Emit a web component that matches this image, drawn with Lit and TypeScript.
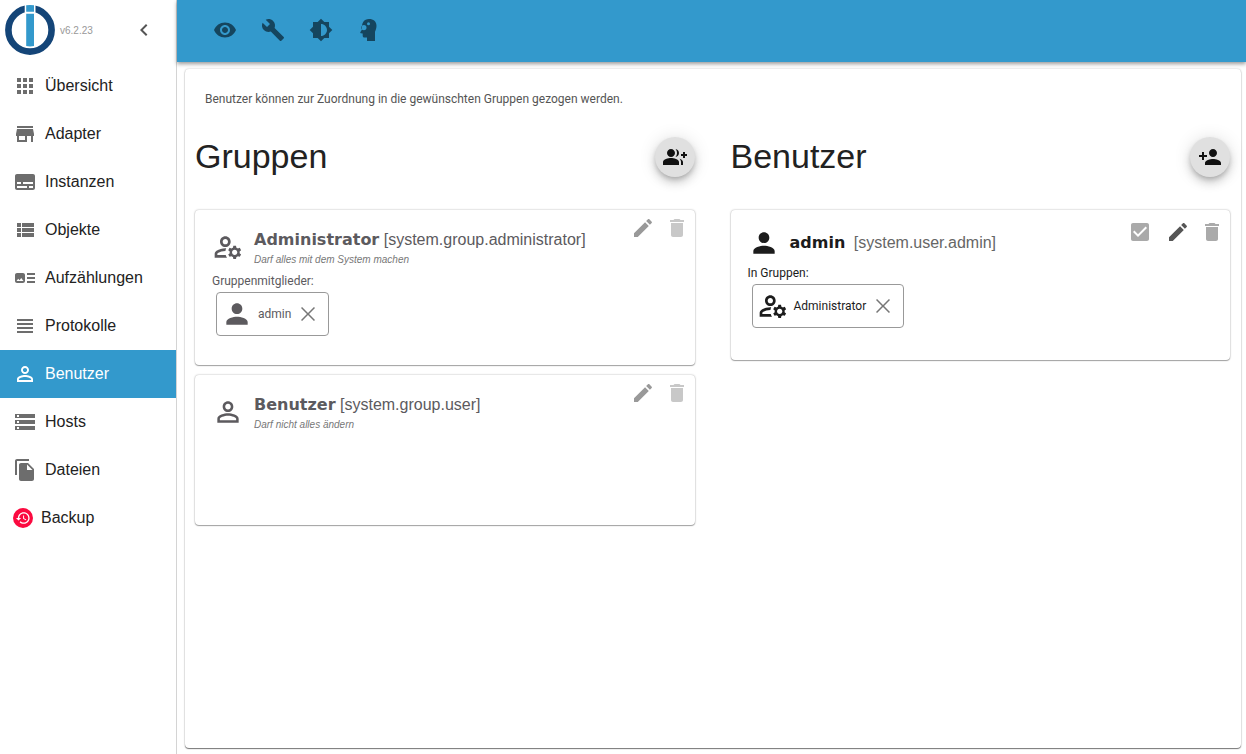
import { LitElement, html, svg, css, nothing } from "lit";
import { customElement, property } from "lit/decorators.js";
import { classMap } from "lit/directives/class-map.js";

const ICONS: Record<string, string> = {
  apps: "M4 8h4V4H4v4zm6 12h4v-4h-4v4zm-6 0h4v-4H4v4zm0-6h4v-4H4v4zm6 0h4v-4h-4v4zm6-10v4h4V4h-4zm-6 4h4V4h-4v4zm6 6h4v-4h-4v4zm0 6h4v-4h-4v4z",
  store: "M20 4H4v2h16V4zm1 10v-2l-1-5H4l-1 5v2h1v6h10v-6h4v6h2v-6h1zm-9 4H6v-4h6v4z",
  subtitles: "M20 4H4c-1.1 0-2 .9-2 2v12c0 1.1.9 2 2 2h16c1.1 0 2-.9 2-2V6c0-1.1-.9-2-2-2zM4 12h4v2H4v-2zm10 6H4v-2h10v2zm6 0h-4v-2h4v2zm0-4H10v-2h10v2z",
  list: "M4 14h4v-4H4v4zm0 5h4v-4H4v4zM4 9h4V5H4v4zm5 5h12v-4H9v4zm0 5h12v-4H9v4zM9 5v4h12V5H9z",
  art: "M22 13h-8v-2h8v2zm0-6h-8v2h8V7zm-8 10h8v-2h-8v2zm-2-8v6c0 1.1-.9 2-2 2H4c-1.1 0-2-.9-2-2V9c0-1.1.9-2 2-2h6c1.1 0 2 .9 2 2zm-1.5 6l-2.25-3-1.75 2.26-1.25-1.51L3.5 15h7z",
  lines: "M4 15h16v-2H4v2zm0 4h16v-2H4v2zm0-8h16V9H4v2zm0-6v2h16V5H4z",
  personOutline: "M12 5.9c1.16 0 2.1.94 2.1 2.1s-.94 2.1-2.1 2.1S9.9 9.16 9.9 8s.94-2.1 2.1-2.1m0 9c2.97 0 6.1 1.46 6.1 2.1v1.1H5.9V17c0-.64 3.13-2.1 6.1-2.1M12 4C9.79 4 8 5.79 8 8s1.79 4 4 4 4-1.79 4-4-1.79-4-4-4zm0 9c-2.67 0-8 1.34-8 4v3h16v-3c0-2.66-5.33-4-8-4z",
  storage: "M2 20h20v-4H2v4zm2-3h2v2H4v-2zM2 4v4h20V4H2zm4 3H4V5h2v2zm-4 7h20v-4H2v4zm2-3h2v2H4v-2z",
  files: "M16 1H4c-1.1 0-2 .9-2 2v14h2V3h12V1zm-1 4l6 6v10c0 1.1-.9 2-2 2H7.99C6.89 23 6 22.1 6 21l.01-14c0-1.1.89-2 1.99-2h7zm-1 7h5.5L14 6.5V12z",
  chevron: "M15.41 7.41L14 6l-6 6 6 6 1.41-1.41L10.83 12z",
  eye: "M12 4.5C7 4.5 2.73 7.61 1 12c1.73 4.39 6 7.5 11 7.5s9.27-3.11 11-7.5c-1.73-4.39-6-7.5-11-7.5zM12 17c-2.76 0-5-2.24-5-5s2.24-5 5-5 5 2.24 5 5-2.24 5-5 5zm0-8c-1.66 0-3 1.34-3 3s1.34 3 3 3 3-1.34 3-3-1.34-3-3-3z",
  wrench: "M22.7 19l-9.1-9.1c.9-2.3.4-5-1.5-6.9-2-2-5-2.4-7.4-1.3L9 6 6 9 1.6 4.7C.4 7.1.9 10.1 2.9 12.1c1.9 1.9 4.6 2.4 6.9 1.5l9.1 9.1c.4.4 1 .4 1.4 0l2.3-2.3c.5-.4.5-1.1.1-1.4z",
  brightness: "M20 15.31L23.31 12 20 8.69V4h-4.69L12 .69 8.69 4H4v4.69L.69 12 4 15.31V20h4.69L12 23.31 15.31 20H20v-4.69zM12 18V6c3.31 0 6 2.69 6 6s-2.69 6-6 6z",
  person: "M12 12c2.21 0 4-1.79 4-4s-1.79-4-4-4-4 1.79-4 4 1.79 4 4 4zm0 2c-2.67 0-8 1.34-8 4v2h16v-2c0-2.66-5.33-4-8-4z",
  personAdd: "M15 12c2.21 0 4-1.79 4-4s-1.79-4-4-4-4 1.79-4 4 1.79 4 4 4zm-9-2V7H4v3H1v2h3v3h2v-3h3v-2H6zm9 4c-2.67 0-8 1.34-8 4v2h16v-2c0-2.66-5.33-4-8-4z",
  groupAdd: "M22 9V7h-2v2h-2v2h2v2h2v-2h2V9zM8 12c2.21 0 4-1.79 4-4s-1.79-4-4-4-4 1.79-4 4 1.79 4 4 4zM8 13c-2.67 0-8 1.34-8 4v3h16v-3c0-2.66-5.33-4-8-4zM12.51 4.05C13.43 5.11 14 6.49 14 8s-.57 2.89-1.49 3.95C14.47 11.7 16 10.04 16 8s-1.53-3.7-3.49-3.95zM16.53 13.83C17.42 14.66 18 15.7 18 17v3h2v-3c0-1.45-1.59-2.51-3.47-3.17z",
  manage: "M4 18v-.65c0-.34.16-.66.41-.81C6.1 15.53 8.03 15 10 15c.03 0 .05 0 .08.01.1-.7.3-1.37.59-1.98-.22-.02-.44-.03-.67-.03-2.42 0-4.68.67-6.61 1.82-.88.52-1.39 1.5-1.39 2.53V20h9.26c-.42-.6-.75-1.28-.97-2H4zM10 12c2.21 0 4-1.79 4-4s-1.79-4-4-4C7.79 4 6 5.79 6 8s1.79 4 4 4zm0-6c1.1 0 2 .9 2 2s-.9 2-2 2-2-.9-2-2 .9-2 2-2zM20.75 16c0-.22-.03-.42-.06-.63l1.14-1.01-1-1.73-1.45.49c-.32-.27-.68-.48-1.08-.63L18 11h-2l-.3 1.49c-.4.15-.76.36-1.08.63l-1.45-.49-1 1.73 1.14 1.01c-.03.21-.06.41-.06.63s.03.42.06.63l-1.14 1.01 1 1.73 1.45-.49c.32.27.68.48 1.08.63L16 21h2l.3-1.49c.4-.15.76-.36 1.08-.63l1.45.49 1-1.73-1.14-1.01c.03-.21.06-.41.06-.63zM17 18c-1.1 0-2-.9-2-2s.9-2 2-2 2 .9 2 2-.9 2-2 2z",
  edit: "M3 17.25V21h3.75L17.81 9.94l-3.75-3.75L3 17.25zM20.71 7.04c.39-.39.39-1.02 0-1.41l-2.34-2.34c-.39-.39-1.02-.39-1.41 0l-1.83 1.83 3.75 3.75 1.83-1.83z",
  trash: "M6 19c0 1.1.9 2 2 2h8c1.1 0 2-.9 2-2V7H6v12zM19 4h-3.5l-1-1h-5l-1 1H5v2h14V4z",
  checkbox: "M19 3H5c-1.11 0-2 .9-2 2v14c0 1.1.89 2 2 2h14c1.11 0 2-.9 2-2V5c0-1.1-.89-2-2-2zm-9 14l-5-5 1.41-1.41L10 14.17l7.59-7.59L19 8l-9 9z",
  close: "M19 6.06L17.94 5 12 10.94 6.06 5 5 6.06 10.94 12 5 17.94 6.06 19 12 13.06 17.94 19 19 17.94 13.06 12z",
  history: "M13 3c-4.97 0-9 4.03-9 9H1l3.89 3.89.07.14L9 12H6c0-3.87 3.13-7 7-7s7 3.13 7 7-3.13 7-7 7c-1.93 0-3.68-.79-4.94-2.06l-1.42 1.42C8.27 19.99 10.51 21 13 21c4.97 0 9-4.03 9-9s-4.03-9-9-9zm-1 5v5l4.28 2.54.72-1.21-3.5-2.08V8H12z",
};

const icon = (name: string, size = 24) => html`<svg
  width=${size}
  height=${size}
  viewBox="0 0 24 24"
  fill="currentColor"
  aria-hidden="true"
>
  ${name === "head"
    ? svg`<path fill-rule="evenodd" d="M12 1c4.500 0 7.500 2.600 7.500 6.800 0 2.600-.8 4.200-1.500 6V23h-8v-3.500H7.500c-1.200 0-1.800-.7-1.800-1.800v-2.200l-2-.3c-.5-.1-.6-.5-.4-.9L5 11.500C4.300 5 7 1 12 1zM6.900 7a2.600 2.600 0 1 0 0 5.200 2.600 2.600 0 0 0 0-5.200zM11.500 4.200a1.500 1.500 0 1 0 0 3 1.500 1.500 0 0 0 0-3z"/>`
    : svg`<path d=${ICONS[name]}/>`}
</svg>`;

const shared = css`
  * {
    box-sizing: border-box;
  }
  svg {
    display: block;
    flex: none;
  }
  button {
    display: flex;
    align-items: center;
    justify-content: center;
    padding: 0;
    border: 0;
    background: none;
    color: inherit;
    font: inherit;
    cursor: pointer;
  }
`;

interface Chip {
  icon: string;
  label: string;
}

@customElement("entity-card")
export class EntityCard extends LitElement {
  @property() kind: "group" | "user" = "group";
  @property() icon = "person";
  @property() name = "";
  @property() ident = "";
  @property() description = "";
  @property() caption = "";
  @property({ attribute: false }) chips: Chip[] = [];

  static styles = [
    shared,
    css`
      :host {
        display: block;
      }
      .card {
        display: flex;
        flex-direction: column;
        position: relative;
        min-height: 150px;
        padding: 16px 17px 29px;
        border-radius: 4px;
        background: #fff;
        box-shadow: 0 1px 1px #0000004d, 0 0 2px #00000059;
      }
      .group {
        color: #5c5a5e;
      }
      .user {
        padding: 16px 17px 32px;
        color: #1c1c1c;
      }
      .head {
        display: flex;
        align-items: center;
        gap: 10px;
      }
      .group .head {
        min-height: 42px;
      }
      .group .texts {
        padding-top: 2px;
      }
      .user .head {
        min-height: 34px;
      }
      .texts {
        display: flex;
        flex-direction: column;
      }
      .title {
        margin: 0;
        font-weight: 400;
        font-size: 16px;
        line-height: 24px;
      }
      .name {
        font-family: "DejaVu Sans", sans-serif;
        font-weight: 700;
      }
      .user .ident {
        margin-left: 4px;
        color: #666;
      }
      .description {
        margin: 0;
        color: #777;
        font-size: 10px;
        font-style: italic;
        line-height: 16px;
      }
      .caption,
      .chip {
        font-family: Roboto, "Open Sans", sans-serif;
        font-size: 12px;
      }
      .caption {
        margin-top: 4px;
        line-height: 18px;
      }
      .chips {
        display: flex;
        flex-wrap: wrap;
        gap: 8px;
        margin: 2px 4px 0;
        padding: 0;
        list-style: none;
      }
      .chip {
        display: flex;
        align-items: center;
        height: 44px;
        padding: 0 8px 0 4px;
        border: 1px solid #999;
        border-radius: 4px;
        gap: 5px;
      }
      .chip button {
        color: #777;
      }
      .actions {
        display: flex;
        position: absolute;
        top: 6px;
        right: 6px;
        gap: 10px;
      }
      .user .actions {
        top: 10px;
        color: #555;
      }
      .group .actions button {
        color: #999;
      }
      .group .actions button:disabled {
        color: #c8c8c8;
      }
      .user .actions :disabled,
      .toggle {
        color: #aaa;
      }
      .toggle {
        display: grid;
        margin-right: 4px;
      }
      .toggle > * {
        grid-area: 1 / 1;
        margin: 0;
      }
      .toggle input {
        opacity: 0;
      }
    `,
  ];

  render() {
    return html`<article class=${classMap({ card: true, [this.kind]: true })}>
      <div class="head">
        ${icon(this.icon, 32)}
        <div class="texts">
          <h2 class="title">
            <strong class="name">${this.name}</strong>
            <span class="ident">[${this.ident}]</span>
          </h2>
          ${this.description
            ? html`<p class="description">${this.description}</p>`
            : nothing}
        </div>
      </div>
      ${this.chips.length
        ? html`<div class="caption">${this.caption}</div>
            <ul class="chips">
              ${this.chips.map(
                (c) => html`<li class="chip">
                  ${icon(c.icon, 32)}<span>${c.label}</span>
                  <button aria-label="${c.label} entfernen">${icon("close")}</button>
                </li>`
              )}
            </ul>`
        : nothing}
      <div class="actions">
        ${this.kind === "user"
          ? html`<label class="toggle"
              >${icon("checkbox")}<input
                type="checkbox"
                aria-label="Aktiviert"
                checked
                disabled
            /></label>`
          : nothing}
        <button aria-label="Bearbeiten">${icon("edit")}</button>
        <button aria-label="Löschen" disabled>${icon("trash")}</button>
      </div>
    </article>`;
  }
}

const NAV = [
  ["apps", "Übersicht"],
  ["store", "Adapter"],
  ["subtitles", "Instanzen"],
  ["list", "Objekte"],
  ["art", "Aufzählungen"],
  ["lines", "Protokolle"],
  ["personOutline", "Benutzer"],
  ["storage", "Hosts"],
  ["files", "Dateien"],
];

@customElement("app-root")
export class AppRoot extends LitElement {
  static styles = [
    shared,
    css`
      :host {
        display: flex;
        min-height: 100vh;
        background: #fff;
        color: #222;
        font-family: "Liberation Sans", Arial, sans-serif;
        font-size: 16px;
      }
      .sidebar {
        flex: none;
        width: 177px;
        border-right: 1px solid #d4d4d4;
      }
      .brand {
        display: flex;
        align-items: center;
        height: 61px;
        padding: 0 20px 1px 5px;
        gap: 5px;
      }
      .version {
        flex: 1;
        color: #999;
        font-size: 10px;
      }
      .collapse {
        color: #555;
      }
      .link {
        display: flex;
        align-items: center;
        height: 48px;
        padding: 0 13px;
        gap: 8px;
        color: #222;
        line-height: 24px;
        text-decoration: none;
      }
      .links {
        padding-top: 1px;
      }
      .link svg {
        color: #6d6d6d;
      }
      .link.active,
      .link.active svg {
        background: #3399cc;
        color: #fff;
      }
      .main {
        display: flex;
        flex: 1;
        flex-direction: column;
        min-width: 0;
      }
      .bar {
        display: flex;
        align-items: center;
        height: 62px;
        padding: 0 36px 2px;
        gap: 24px;
        background: #3399cc;
        color: #15455e;
        box-shadow: 0 2px 4px #00000066;
      }
      .panel {
        flex: 1;
        margin: 7px 5px 6px 8px;
        padding: 20px 11px 20px 10px;
        border-radius: 4px;
        box-shadow: 0 1px 1px #00000080, 0 0 2px #00000040;
      }
      .hint {
        margin: 0 10px;
        color: #555;
        font-family: Roboto, "Open Sans", sans-serif;
        font-size: 12px;
        line-height: 20px;
      }
      .columns {
        display: grid;
        grid-template-columns: 1fr 1fr;
        gap: 36px;
      }
      .top {
        display: flex;
        align-items: center;
        justify-content: space-between;
        height: 101px;
        padding-bottom: 6px;
      }
      .heading {
        margin: 0;
        padding-bottom: 2px;
        font-size: 34px;
        font-weight: 400;
        line-height: 42px;
      }
      .add {
        width: 40px;
        height: 40px;
        border-radius: 50%;
        background: #e0e0e0;
        color: #111;
        box-shadow: 0 3px 5px -1px #00000033, 0 6px 10px #00000024,
          0 1px 18px #0000001f;
      }
      .cards {
        display: flex;
        flex-direction: column;
        gap: 10px;
      }
    `,
  ];

  render() {
    return html`
      <nav class="sidebar">
        <div class="brand">
          <svg width="50" height="50" viewBox="0 0 50 50" aria-hidden="true">
            <circle cx="25" cy="25" r="21.600" fill="none" stroke="#144578" stroke-width="6.600" />
            <path fill="#fff" d="M19.700 0h10.800v10H19.700z" />
            <path fill="#3399cc" d="M21.200 .3q3.800-.6 7.800 0V6.700h-7.800zM21.200 8.800h7.800V41q-4 .8-7.800 0z" />
          </svg>
          <span class="version">v6.2.23</span>
          <button class="collapse" aria-label="Menü einklappen">${icon("chevron")}</button>
        </div>
        <div class="links">
          ${NAV.map(
            ([name, label]) => html`<a
              href="#"
              class=${classMap({ link: true, active: label === "Benutzer" })}
              >${icon(name)}<span>${label}</span></a
            >`
          )}
          <a href="#" class="link">
            <svg width="20" height="20" viewBox="0 0 20 20" aria-hidden="true">
              <circle cx="10" cy="10" r="10" fill="#fb0a40" />
              <g transform="translate(2.300 2.200) scale(.65)"><path fill="#fff" d=${ICONS.history} /></g>
            </svg>
            <span>Backup</span>
          </a>
        </div>
      </nav>
      <main class="main">
        <header class="bar">
          <button aria-label="Ansicht">${icon("eye")}</button>
          <button aria-label="Einstellungen">${icon("wrench")}</button>
          <button aria-label="Farbschema">${icon("brightness")}</button>
          <button aria-label="Expertenmodus">${icon("head")}</button>
        </header>
        <section class="panel">
          <p class="hint">Benutzer können zur Zuordnung in die gewünschten Gruppen gezogen werden.</p>
          <div class="columns">
            <section>
              <div class="top">
                <h1 class="heading">Gruppen</h1>
                <button class="add" aria-label="Gruppe hinzufügen">${icon("groupAdd")}</button>
              </div>
              <div class="cards">
                <entity-card
                  kind="group"
                  icon="manage"
                  name="Administrator"
                  ident="system.group.administrator"
                  description="Darf alles mit dem System machen"
                  caption="Gruppenmitglieder:"
                  .chips=${[{ icon: "person", label: "admin" }]}
                ></entity-card>
                <entity-card
                  kind="group"
                  icon="personOutline"
                  name="Benutzer"
                  ident="system.group.user"
                  description="Darf nicht alles ändern"
                ></entity-card>
              </div>
            </section>
            <section>
              <div class="top">
                <h1 class="heading">Benutzer</h1>
                <button class="add" aria-label="Benutzer hinzufügen">${icon("personAdd")}</button>
              </div>
              <div class="cards">
                <entity-card
                  kind="user"
                  icon="person"
                  name="admin"
                  ident="system.user.admin"
                  caption="In Gruppen:"
                  .chips=${[{ icon: "manage", label: "Administrator" }]}
                ></entity-card>
              </div>
            </section>
          </div>
        </section>
      </main>
    `;
  }
}
